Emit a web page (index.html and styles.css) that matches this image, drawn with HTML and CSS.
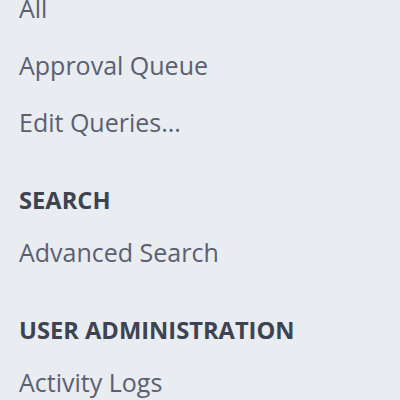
FILE: index.html
```html
<!DOCTYPE html>
<html lang="en">
<head>
<meta charset="UTF-8" />
<meta name="viewport" content="width=device-width, initial-scale=1.0" />
<title>Menu</title>
<link rel="stylesheet" href="styles.css">
</head>
<body>
<nav class="side-menu">
    <ul class="menu-list">
        <li><a href="#">All</a></li>
        <li><a href="#">Approval Queue</a></li>
        <li><a href="#">Edit Queries...</a></li>
    </ul>
    <h3 class="menu-title">SEARCH</h3>
    <ul class="menu-list">
        <li><a href="#">Advanced Search</a></li>
    </ul>
    <h3 class="menu-title">USER ADMINISTRATION</h3>
    <ul class="menu-list">
        <li><a href="#">Activity Logs</a></li>
    </ul>
</nav>
</body>
</html>
```

FILE: styles.css
```css
html, body { margin: 0; padding: 0; background: #e9ecf0; }
body { font-family: "Open Sans", "Noto Sans", sans-serif; color: #5b6070; overflow: hidden; }
.side-menu { margin-top: -20px; padding-left: 19px; }
.menu-list { list-style: none; margin: 0; padding: 0; }
.menu-list li { font-size: 25px; line-height: 57px; }
.menu-list a { color: #5b6070; text-decoration: none; }
.menu-title { margin: 34px 0 9px; font-size: 23.7px; line-height: 30px; font-weight: 700; color: #3e4351; }
```
